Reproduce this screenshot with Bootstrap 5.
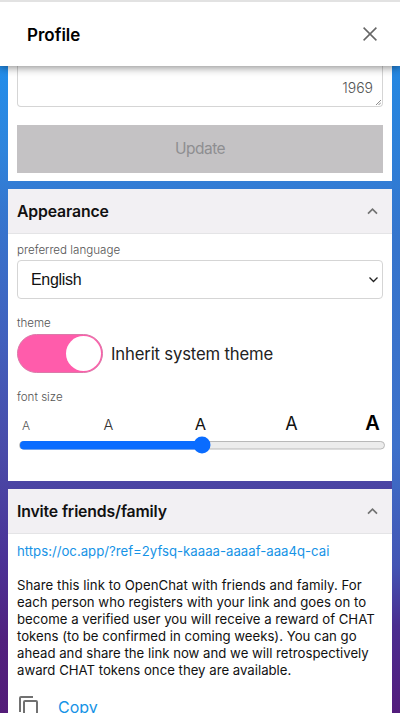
<!DOCTYPE html>
<html lang="en">
<head>
<meta charset="utf-8">
<meta name="viewport" content="width=device-width, initial-scale=1">
<title>Profile</title>
<link href="https://cdn.jsdelivr.net/npm/bootstrap@5.3.0/dist/css/bootstrap.min.css" rel="stylesheet">
<style>
html,body{height:713px;overflow:hidden}
body{font-family:Inter,"Liberation Sans",sans-serif;font-size:13.2px;line-height:17px;color:#111;background:linear-gradient(#238eeb 66px,#2f84dc 150px,#3576cf 210px,#4160bd 340px,#494ba9 450px,#4b3296 560px,#51217e 640px,#531c78)}
.topbar{height:66px;border-top:2px solid #e2e2e2;padding:0 20px 0 27px;box-shadow:0 1px 9px rgba(0,0,0,.5);z-index:2}
.topbar h1{font-size:17px;font-weight:600;line-height:20px;letter-spacing:0;color:#000;padding-top:1px}
.right-edge{right:0;top:66px;width:8px;height:647px;background:linear-gradient(#2588e2,#3574cc 180px,#3c70ca 380px,#4355b4 500px,#4b2d90 560px,#531c7c)}
.content{padding:0 8px;height:647px;overflow:hidden;z-index:1}
.panel{background:#fff}
.profile-panel{height:115px;padding:0 9px;margin-bottom:8px}
.bio{height:41px;border:1px solid #d5d5d5;border-top:0;border-radius:0 0 4px 4px;padding:13px 9px 0 0;font-size:14px;line-height:18px;font-weight:300;color:#555}
.grip{right:1px;bottom:1px}
.update{height:48px;margin-top:17.5px;border-radius:0;border:0;font-size:15.5px;letter-spacing:-.5px;width:100%;padding:1px 0 0}
.update:disabled{background:#c4c2c4;color:#8e8e91;opacity:1}
.panel-head{height:45px;padding:0 13px 0 9px;background:#f2f0f3;border-bottom:1px solid #e4e4e6}
.panel-head h2{font-size:15.8px;line-height:20px;font-weight:600;color:#111;letter-spacing:-.15px;padding-top:2px}
.appearance{height:292px;margin-bottom:8px}
.fields{padding:0 9px}
.field-label{font-size:11.6px;line-height:14px;font-weight:300;color:#555;display:block}
.first-label{padding-top:9px}
.picker{height:39px;border:1px solid #d5d5d5;border-radius:4px;font-size:16px;padding:0 3px 0 13px;color:#111;margin-top:3px}
.picker span{font-family:"Liberation Sans",Arial,sans-serif;letter-spacing:-.3px}
.theme-label{margin-top:17px}
.theme-row{margin-top:4px}
.toggle{width:86px;height:39px;border-radius:20px;background:#ff5cab;border:1px solid #db7aa9;padding:1px}
.knob{width:35px;height:35px;border-radius:50%;background:#fff}
.theme-text{font-size:16.7px;line-height:22px;margin-left:8px;color:#222;letter-spacing:-.17px;padding-top:1px}
.size-label{margin-top:17px}
.sizes{display:grid;grid-template-columns:18px 147px 37px 145px 17px;justify-items:center;align-items:baseline;height:24px;line-height:22px;margin-top:8px}
.sz1{font-size:12px;font-weight:300;color:#555}.sz2{font-size:14.5px;font-weight:300;color:#333}.sz3{font-size:16.5px}.sz4{font-size:18px}.sz5{font-size:20px;font-weight:600;color:#000}
.slider{width:366px;height:18px;margin:0 0 0 2px}
.link-blue{color:#1693e6;text-decoration:none}
.invite{height:224px}
.ref{font-size:13.2px;margin-top:9px}
.share{margin-top:17px}
.share span{display:block;white-space:nowrap}
.share span:first-child{letter-spacing:.05px}
.copy{margin-top:16px;font-size:16px;line-height:24px}
.copy a{margin-left:17px}
</style>
</head>
<body class="position-relative">
<header class="topbar bg-white d-flex align-items-center justify-content-between position-relative">
  <h1 class="m-0">Profile</h1>
  <svg width="20" height="20" viewBox="0 0 20 20" fill="none" stroke="#666" stroke-width="1.5"><path d="M3.6 3.6 16.4 16.4M16.4 3.6 3.6 16.4"/></svg>
</header>
<div class="right-edge position-absolute"></div>
<main class="content position-relative">
  <section class="panel profile-panel">
    <div class="bio text-end position-relative">1969
      <svg class="grip position-absolute" width="5" height="5" viewBox="0 0 6 6" stroke="#777" fill="none"><path d="M0 6 6 0M3 6 6 3"/></svg>
    </div>
    <button class="btn update" disabled>Update</button>
  </section>
  <section class="panel appearance">
    <div class="panel-head d-flex align-items-center justify-content-between"><h2 class="m-0">Appearance</h2>
      <svg width="13" height="13" viewBox="0 0 13 13" fill="none" stroke="#737373" stroke-width="1.7"><path d="m2 8.7 4.5-4.5L11 8.7"/></svg></div>
    <div class="fields">
      <label class="field-label first-label">preferred language</label>
      <div class="picker d-flex align-items-center justify-content-between"><span>English</span>
        <svg width="11" height="11" viewBox="0 0 11 11" fill="none" stroke="#222" stroke-width="1.3"><path d="m1.5 3.5 4 4 4-4"/></svg></div>
      <label class="field-label theme-label">theme</label>
      <div class="theme-row d-flex align-items-center">
        <div class="toggle d-flex justify-content-end align-items-center"><div class="knob"></div></div><span class="theme-text">Inherit system theme</span>
      </div>
      <label class="field-label size-label">font size</label>
      <div class="sizes"><span class="sz1">A</span><span class="sz2">A</span><span class="sz3">A</span><span class="sz4">A</span><span class="sz5">A</span></div>
      <svg class="slider d-block" viewBox="0 0 366 18"><rect x=".5" y="5.5" width="365" height="7.5" rx="3.8" fill="#ececec" stroke="#b8b8b8"/><rect x="1" y="5" width="183" height="8.5" rx="4" fill="#0a6cff"/><circle cx="183" cy="9" r="8.5" fill="#0a6cff"/></svg>
    </div>
  </section>
  <section class="panel invite">
    <div class="panel-head d-flex align-items-center justify-content-between"><h2 class="m-0">Invite friends/family</h2>
      <svg width="13" height="13" viewBox="0 0 13 13" fill="none" stroke="#737373" stroke-width="1.7"><path d="m2 8.7 4.5-4.5L11 8.7"/></svg></div>
    <div class="fields">
      <a class="link-blue d-block ref" href="#">https://oc.app/?ref=2yfsq-kaaaa-aaaaf-aaa4q-cai</a>
      <p class="share mb-0"><span>Share this link to OpenChat with friends and family. For</span><span>each person who registers with your link and goes on to</span><span>become a verified user you will receive a reward of CHAT</span><span>tokens (to be confirmed in coming weeks). You can go</span><span>ahead and share the link now and we will retrospectively</span><span>award CHAT tokens once they are available.</span></p>
      <div class="copy d-flex align-items-start">
        <svg width="24" height="24" viewBox="0 0 24 24" fill="#717171"><path d="M16 1H4a2 2 0 0 0-2 2v14h2V3h12V1zm3 4H8a2 2 0 0 0-2 2v14a2 2 0 0 0 2 2h11a2 2 0 0 0 2-2V7a2 2 0 0 0-2-2zm0 16H8V7h11v14z"/></svg>
        <a class="link-blue" href="#">Copy</a>
      </div>
    </div>
  </section>
</main>
<script src="https://cdn.jsdelivr.net/npm/bootstrap@5.3.0/dist/js/bootstrap.bundle.min.js"></script>
</body>
</html>
